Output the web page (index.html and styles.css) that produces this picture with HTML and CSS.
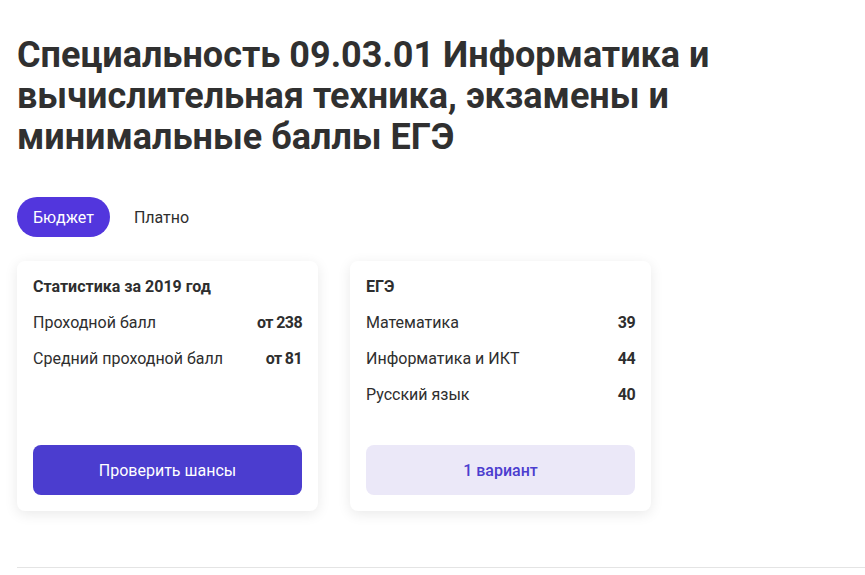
FILE: index.html
```html
<!DOCTYPE html>
<html lang="ru">
<head>
<meta charset="utf-8">
<link rel="stylesheet" href="styles.css">
</head>
<body>
<div class="page">
  <h1 class="title">Специальность 09.03.01 Информатика и вычислительная техника, экзамены и минимальные баллы ЕГЭ</h1>
  <div class="tabs">
    <span class="tab tab-active">Бюджет</span>
    <span class="tab">Платно</span>
  </div>
  <div class="cards">
    <div class="card">
      <div class="card-title">Статистика за 2019 год</div>
      <div class="row"><span>Проходной балл</span><span class="val">от 238</span></div>
      <div class="row"><span>Средний проходной балл</span><span class="val">от 81</span></div>
      <div class="btn btn-primary">Проверить шансы</div>
    </div>
    <div class="card">
      <div class="card-title">ЕГЭ</div>
      <div class="row"><span>Математика</span><span class="val">39</span></div>
      <div class="row"><span>Информатика и ИКТ</span><span class="val">44</span></div>
      <div class="row"><span>Русский язык</span><span class="val">40</span></div>
      <div class="btn btn-light">1 вариант</div>
    </div>
  </div>
  <div class="divider"></div>
</div>
</body>
</html>
```
FILE: styles.css
```css
* { box-sizing: border-box; }
html, body { margin: 0; padding: 0; background: #fff; }
body {
  font-family: Roboto, "Liberation Sans", Arial, sans-serif;
  color: #2e2e2e;
}
.page {
  padding: 35px 0 0 17px;
}
.title {
  margin: 0;
  font-size: 36px;
  line-height: 41px;
  font-weight: 700;
  color: #303030;
  max-width: 730px;
}
.tabs {
  display: flex;
  gap: 8px;
  margin-top: 39px;
}
.tab {
  height: 40px;
  padding: 0 16px;
  display: flex;
  align-items: center;
  font-size: 16px;
  border-radius: 20px;
  color: #2e2e2e;
}
.tab-active {
  background: #5236dd;
  color: #fff;
}
.cards {
  display: flex;
  gap: 32px;
  margin-top: 24px;
}
.card {
  width: 301px;
  height: 250px;
  background: #fff;
  border-radius: 8px;
  box-shadow: 0 3px 14px rgba(0, 0, 0, 0.09);
  padding: 16px;
  display: flex;
  flex-direction: column;
  gap: 16px;
}
.card-title {
  font-size: 16px;
  line-height: 20px;
  font-weight: 700;
}
.row {
  display: flex;
  justify-content: space-between;
  font-size: 16px;
  line-height: 20px;
}
.val {
  font-weight: 700;
  letter-spacing: -0.6px;
}
.btn {
  margin-top: auto;
  height: 50px;
  border-radius: 8px;
  display: flex;
  align-items: center;
  justify-content: center;
  font-size: 16px;
  font-weight: 500;
}
.btn-primary {
  background: #4b3dcf;
  color: #fff;
  font-weight: 400;
}
.btn-light {
  background: #ebe8f8;
  color: #4b3dcf;
}
.divider {
  margin-top: 56px;
  height: 1px;
  background: #e4e4e4;
}
```
